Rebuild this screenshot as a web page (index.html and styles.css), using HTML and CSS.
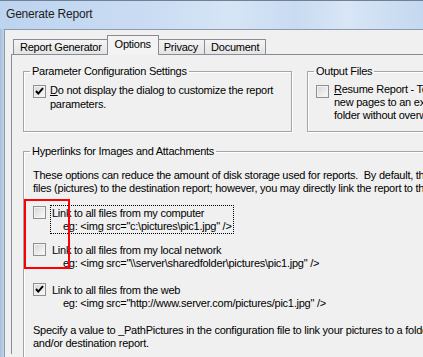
FILE: index.html
```html
<!DOCTYPE html>
<html lang="en">
  <head>
    <meta charset="UTF-8" />
    <title>Generate Report</title>
    <link rel="stylesheet" href="styles.css">
  </head>
  <body>
    <div class="titlebar">Generate Report</div>
    <div class="frame">
      <div class="edge"></div>
      <div class="client">
        <div class="tabs">
          <div class="tab">Report Generator</div>
          <div class="tab active">Options</div>
          <div class="tab">Privacy</div>
          <div class="tab">Document</div>
        </div>

        <div class="panel">
          <div class="group-row">
            <fieldset class="group params">
              <legend>Parameter Configuration Settings</legend>
              <div class="option">
                <span class="box checked">
                  <svg width="11" height="11" viewBox="0 0 11 11"><path d="M2 5 L4.3 7.6 L9 2.2" fill="none" stroke="#000" stroke-width="2"/></svg>
                </span>
                <span class="option-text"><u>D</u>o not display the dialog to customize the report<br>parameters.</span>
              </div>
            </fieldset>

            <fieldset class="group output">
              <legend>Output Files</legend>
              <div class="option compact">
                <span class="box"></span>
                <span class="option-text"><u>R</u>esume Report - To add<br>new pages to an existing report in the<br>folder without overwriting it.</span>
              </div>
            </fieldset>
          </div>

          <fieldset class="group links">
            <legend>Hyperlinks for Images and Attachments</legend>
            <p class="note">
              These options can reduce the amount of disk storage used for reports.&nbsp; By default, the report copies all image<br>
              files (pictures) to the destination report; however, you may directly link the report to the original files.
            </p>

            <div class="link-list">
              <div class="link-option">
                <span class="box"></span>
                <div class="link-label focus">
                  Link to all files from my computer
                  <div class="eg">eg: &lt;img src="c:\pictures\pic1.jpg" /&gt;</div>
                </div>
              </div>
              <div class="link-option">
                <span class="box"></span>
                <div class="link-label">
                  Link to all files from my local network
                  <div class="eg">eg: &lt;img src="\\server\sharedfolder\pictures\pic1.jpg" /&gt;</div>
                </div>
              </div>
              <div class="link-option web">
                <span class="box checked">
                  <svg width="11" height="11" viewBox="0 0 11 11"><path d="M2 5 L4.3 7.6 L9 2.2" fill="none" stroke="#000" stroke-width="2"/></svg>
                </span>
                <div class="link-label">
                  Link to all files from the web
                  <div class="eg">eg: &lt;img src="http://www.server.com/pictures/pic1.jpg" /&gt;</div>
                </div>
              </div>
            </div>

            <p class="note last">
              Specify a value to _PathPictures in the configuration file to link your pictures to a folder on your server<br>
              and/or destination report.
            </p>
          </fieldset>
        </div>
      </div>
    </div>

    <!-- red annotation drawn over the first two checkboxes -->
    <div class="highlight"></div>
  </body>
</html>
```

FILE: styles.css
```css
/* Reset */
* {
  margin: 0;
  padding: 0;
  box-sizing: border-box;
}

body {
  width: 423px;
  height: 357px;
  overflow: hidden;
  position: relative;
  font-family: "Liberation Sans", Arial, sans-serif;
  font-size: 11px;
  letter-spacing: -0.25px;
  color: #000;
  background: #f0f0f0;
}

/* Window chrome */
.titlebar {
  height: 29px;
  border-top: 1px solid #6f8196;
  padding-left: 6px;
  font-size: 12px;
  letter-spacing: -0.2px;
  line-height: 27px;
  color: #1e1e1e;
  background: linear-gradient(to right, #bdd4ef 0%, #cadcf3 35%, #d6e5f6 55%, #c9dbf2 70%, #d8e6f6 82%, #c4d8f0 100%);
}

.frame {
  display: flex;
  height: 328px;
}

.edge {
  width: 4px;
  background: linear-gradient(to right, #a7bfdc, #c2d4ea);
}

.client {
  flex: 1;
  border-left: 1px solid #8c9aab;
  border-top: 1px solid #8c9aab;
  padding: 5px 0 0 6px;
  overflow: hidden;
}

/* Tabs */
.tabs {
  display: flex;
  align-items: flex-end;
  height: 19px;
  padding-left: 2px;
  position: relative;
  z-index: 1;
}

.tab {
  height: 15px;
  padding: 0 6px;
  margin-right: -1px;
  border: 1px solid #898c95;
  border-bottom: none;
  line-height: 14px;
  white-space: nowrap;
  background: linear-gradient(#f4f4f4, #e4e4e4);
}

.tab.active {
  height: 20px;
  margin: 0 -2px -1px -1px;
  padding: 0 7px;
  line-height: 16px;
  background: #f3f3f3;
  position: relative;
  z-index: 2;
}

.panel {
  height: 300px;
  border-top: 1px solid #898c95;
  border-left: 1px solid #898c95;
  padding: 10px 0 0 11px;
}

/* Group boxes */
.group-row {
  display: flex;
  gap: 15px;
}

.group {
  border: 1px solid #a5a5a5;
  box-shadow: inset 1px 1px 0 #fff, 1px 1px 0 #fff;
  padding: 0;
  flex: none;
}

.group legend {
  margin-left: 6px;
  padding: 0 2px;
  line-height: 13px;
}

.params {
  width: 269px;
  height: 67px;
}

.output {
  width: 260px;
  height: 67px;
}

.option {
  display: flex;
  align-items: flex-start;
  margin-top: 5px;
  padding-left: 9px;
  line-height: 14px;
  white-space: nowrap;
}

.option .box {
  margin-top: 2px;
  margin-right: 4px;
}

.option.compact {
  line-height: 13px;
  padding-left: 8px;
}

.option.compact .box {
  margin-right: 5px;
}

/* Checkboxes */
.box {
  flex: none;
  width: 13px;
  height: 13px;
  border: 1px solid #8f8f8f;
  background: linear-gradient(135deg, #d6d6d6, #fbfbfb);
  box-shadow: inset 0 0 0 1px #f2f2f2;
  display: flex;
  align-items: center;
  justify-content: center;
}

.box svg {
  display: block;
}

/* Hyperlinks group */
.links {
  width: 420px;
  height: 260px;
  margin-top: 13px;
}

.note {
  margin-top: 11px;
  padding-left: 9px;
  line-height: 13px;
  white-space: nowrap;
}

.note.last {
  margin-top: 13px;
}

.link-list {
  margin-top: 10px;
}

.link-option {
  display: flex;
  align-items: flex-start;
  padding-left: 9px;
}

.link-option + .link-option {
  margin-top: 8px;
}

.link-option.web {
  margin-top: 11px;
}

.link-option .box {
  margin-top: 1px;
  margin-right: 4px;
}

.link-label {
  border: 1px dotted transparent;
  padding: 1px 1px 0;
  line-height: 13px;
  white-space: nowrap;
}

.link-label.focus {
  border-color: #000;
}

.eg {
  padding-left: 11px;
}

/* Red annotation box */
.highlight {
  position: absolute;
  left: 24px;
  top: 199px;
  width: 46px;
  height: 70px;
  border: 2px solid #f00;
}
```
